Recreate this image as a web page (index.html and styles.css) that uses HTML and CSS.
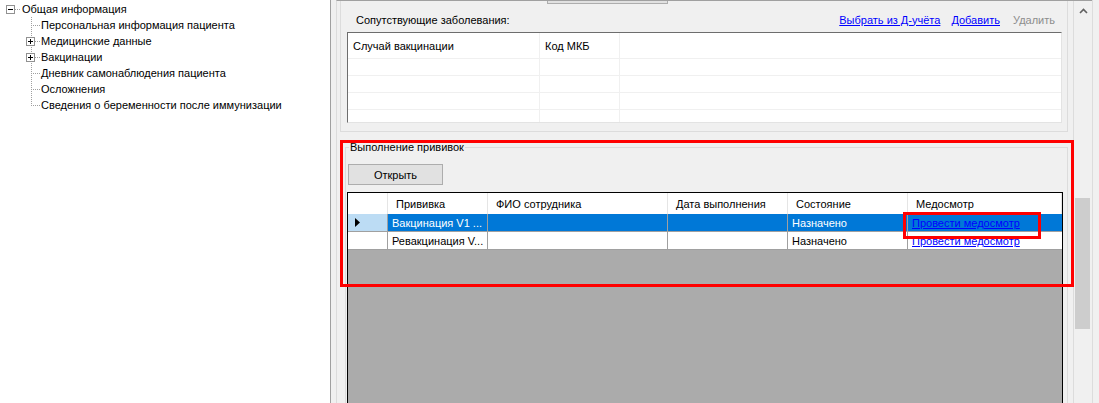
FILE: index.html
```html
<!DOCTYPE html>
<html lang="ru">
<head>
    <meta charset="UTF-8">
    <meta name="viewport" content="width=device-width, initial-scale=1.0">
    <title>Вакцинация</title>
    <link rel="stylesheet" href="styles.css">
</head>
<body>
    <div class="app">
        <div class="tree">
            <div class="node">
                <svg class="gutter-top" width="21" height="16">
                    <rect x="6.5" y="4.5" width="8" height="8" fill="#fff" stroke="#919191"/>
                    <line x1="8" y1="8.5" x2="13" y2="8.5" stroke="#000"/>
                    <line x1="15" y1="8.5" x2="21" y2="8.5" stroke="#a0a0a0" stroke-dasharray="1 1"/>
                </svg>
                <span>Общая информация</span>
            </div>
            <div class="node">
                <svg class="gutter" width="40" height="16">
                    <line x1="31.5" y1="0" x2="31.5" y2="16" stroke="#a0a0a0" stroke-dasharray="1 1"/>
                    <line x1="33" y1="8.5" x2="40" y2="8.5" stroke="#a0a0a0" stroke-dasharray="1 1"/>
                </svg>
                <span>Персональная информация пациента</span>
            </div>
            <div class="node">
                <svg class="gutter" width="40" height="16">
                    <line x1="31.5" y1="0" x2="31.5" y2="16" stroke="#a0a0a0" stroke-dasharray="1 1"/>
                    <rect x="26.5" y="4.5" width="8" height="8" fill="#fff" stroke="#919191"/>
                    <line x1="28" y1="8.5" x2="33" y2="8.5" stroke="#000"/>
                    <line x1="30.5" y1="6" x2="30.5" y2="11" stroke="#000"/>
                    <line x1="35" y1="8.5" x2="40" y2="8.5" stroke="#a0a0a0" stroke-dasharray="1 1"/>
                </svg>
                <span>Медицинские данные</span>
            </div>
            <div class="node">
                <svg class="gutter" width="40" height="16">
                    <line x1="31.5" y1="0" x2="31.5" y2="16" stroke="#a0a0a0" stroke-dasharray="1 1"/>
                    <rect x="26.5" y="4.5" width="8" height="8" fill="#fff" stroke="#919191"/>
                    <line x1="28" y1="8.5" x2="33" y2="8.5" stroke="#000"/>
                    <line x1="30.5" y1="6" x2="30.5" y2="11" stroke="#000"/>
                    <line x1="35" y1="8.5" x2="40" y2="8.5" stroke="#a0a0a0" stroke-dasharray="1 1"/>
                </svg>
                <span>Вакцинации</span>
            </div>
            <div class="node">
                <svg class="gutter" width="40" height="16">
                    <line x1="31.5" y1="0" x2="31.5" y2="16" stroke="#a0a0a0" stroke-dasharray="1 1"/>
                    <line x1="33" y1="8.5" x2="40" y2="8.5" stroke="#a0a0a0" stroke-dasharray="1 1"/>
                </svg>
                <span>Дневник самонаблюдения пациента</span>
            </div>
            <div class="node">
                <svg class="gutter" width="40" height="16">
                    <line x1="31.5" y1="0" x2="31.5" y2="16" stroke="#a0a0a0" stroke-dasharray="1 1"/>
                    <line x1="33" y1="8.5" x2="40" y2="8.5" stroke="#a0a0a0" stroke-dasharray="1 1"/>
                </svg>
                <span>Осложнения</span>
            </div>
            <div class="node">
                <svg class="gutter" width="40" height="16">
                    <line x1="31.5" y1="0" x2="31.5" y2="9" stroke="#a0a0a0" stroke-dasharray="1 1"/>
                    <line x1="33" y1="8.5" x2="40" y2="8.5" stroke="#a0a0a0" stroke-dasharray="1 1"/>
                </svg>
                <span>Сведения о беременности после иммунизации</span>
            </div>
        </div>

        <div class="splitter"></div>

        <div class="main">
            <div class="content">
                <div class="top-box">
                    <div class="cut-btn"></div>
                    <div class="label-row">
                        <span>Сопутствующие заболевания:</span>
                        <div class="links">
                            <a href="#">Выбрать из Д-учёта</a>
                            <a href="#">Добавить</a>
                            <span class="disabled">Удалить</span>
                        </div>
                    </div>
                    <div class="list">
                        <div class="list-row list-head">
                            <div class="lc c-case">Случай вакцинации</div>
                            <div class="lc c-mkb">Код МКБ</div>
                            <div class="lc c-rest"></div>
                        </div>
                        <div class="list-row">
                            <div class="lc c-case"></div><div class="lc c-mkb"></div><div class="lc c-rest"></div>
                        </div>
                        <div class="list-row">
                            <div class="lc c-case"></div><div class="lc c-mkb"></div><div class="lc c-rest"></div>
                        </div>
                        <div class="list-row">
                            <div class="lc c-case"></div><div class="lc c-mkb"></div><div class="lc c-rest"></div>
                        </div>
                        <div class="list-row">
                            <div class="lc c-case"></div><div class="lc c-mkb"></div><div class="lc c-rest"></div>
                        </div>
                    </div>
                </div>

                <fieldset class="group">
                    <legend>Выполнение прививок</legend>
                    <button class="btn">Открыть</button>
                    <div class="grid">
                        <div class="g-row g-head">
                            <div class="gc g-rh"></div>
                            <div class="gc g-vac">Прививка</div>
                            <div class="gc g-fio">ФИО сотрудника</div>
                            <div class="gc g-date">Дата выполнения</div>
                            <div class="gc g-state">Состояние</div>
                            <div class="gc g-med">Медосмотр</div>
                        </div>
                        <div class="g-row selected">
                            <div class="gc g-rh">
                                <svg width="6" height="9"><polygon points="0,0 5,4.5 0,9" fill="#000"/></svg>
                            </div>
                            <div class="gc g-vac">Вакцинация V1 ...</div>
                            <div class="gc g-fio"></div>
                            <div class="gc g-date"></div>
                            <div class="gc g-state">Назначено</div>
                            <div class="gc g-med"><a href="#">Провести медосмотр</a></div>
                        </div>
                        <div class="g-row">
                            <div class="gc g-rh"></div>
                            <div class="gc g-vac">Ревакцинация V...</div>
                            <div class="gc g-fio"></div>
                            <div class="gc g-date"></div>
                            <div class="gc g-state">Назначено</div>
                            <div class="gc g-med"><a href="#">Провести медосмотр</a></div>
                        </div>
                    </div>
                </fieldset>
            </div>
            <div class="vscroll">
                <svg class="arrow" width="9" height="6"><polyline points="1,5 4.5,1.5 8,5" fill="none" stroke="#606060" stroke-width="1.6"/></svg>
                <div class="thumb"></div>
            </div>
            <div class="edge"></div>
        </div>

        <div class="mark mark-group"></div>
        <div class="mark mark-link"></div>
    </div>
</body>
</html>
```

FILE: styles.css
```css
* {
    box-sizing: border-box;
}
body {
    margin: 0;
    font-family: "Liberation Sans", Arial, sans-serif;
    font-size: 11px;
    color: #000;
    background-color: #f0f0f0;
    overflow: hidden;
}
.app {
    position: relative;
    display: flex;
    width: 1099px;
    height: 403px;
    overflow: hidden;
}
.tree {
    width: 331px;
    height: 403px;
    padding-top: 1px;
    background-color: #fff;
    border-right: 1px solid #a0a0a0;
}
.node {
    display: flex;
    align-items: center;
    height: 16px;
    white-space: nowrap;
}
.gutter-top {
    margin-right: 1px;
}
.gutter {
    margin-right: 1px;
}
.splitter {
    width: 5px;
    background-color: #f0f0f0;
}
.main {
    display: flex;
    border-top: 1px solid #a0a0a0;
    border-left: 1px solid #dcdcdc;
    height: 403px;
}
.content {
    width: 737px;
    border-right: 1px solid #dcdcdc;
    padding: 0 5px 0 3px;
}
.vscroll {
    position: relative;
    width: 18px;
    background-color: #f0f0f0;
}
.arrow {
    display: block;
    margin: 7px 0 0 5px;
}
.thumb {
    margin: 184px 0 0 1px;
    width: 15px;
    height: 131px;
    background-color: #cdcdcd;
}
.edge {
    width: 7px;
    margin-top: -1px;
    background-color: #f0f0f0;
    border-left: 1px solid #dcdcdc;
}
.top-box {
    height: 131px;
    border: 1px solid #dcdcdc;
    border-top: none;
}
.cut-btn {
    width: 121px;
    height: 3px;
    margin-left: 206px;
    background-color: #e1e1e1;
    border: 1px solid #adadad;
    border-top: none;
}
.label-row {
    display: flex;
    justify-content: space-between;
    align-items: center;
    height: 28px;
    padding: 3px 12px 0 15px;
}
.links {
    display: flex;
    gap: 11px;
}
.links a {
    color: #0000ff;
}
.disabled {
    color: #8d8d8d;
    margin-left: 2px;
}
.list {
    height: 91px;
    margin: 0 5px 0 6px;
    background-color: #fff;
    border-top: 1px solid #6d6d6d;
    border-left: 1px solid #6d6d6d;
    border-right: 1px solid #e3e3e3;
    border-bottom: 1px solid #e3e3e3;
    overflow: hidden;
}
.list-row {
    display: flex;
    height: 17px;
    border-bottom: 1px solid #f0f0f0;
}
.list-head {
    height: 26px;
    align-items: stretch;
}
.lc {
    display: flex;
    align-items: center;
    padding-left: 5px;
    border-right: 1px solid #f0f0f0;
}
.c-case {
    width: 192px;
}
.c-mkb {
    width: 80px;
}
.c-rest {
    flex: 1;
    border-right: none;
}
.group {
    margin: 9px 0 0 5px;
    padding: 0;
    min-width: 0;
    height: 270px;
    border: 1px solid #dcdcdc;
}
.group legend {
    margin-left: 3px;
    padding: 0 1px;
    line-height: 13px;
}
.btn {
    display: block;
    width: 95px;
    height: 21px;
    margin: 10px 0 0 2px;
    padding: 0;
    font-family: "Liberation Sans", Arial, sans-serif;
    font-size: 11px;
    color: #000;
    background-color: #e1e1e1;
    border: 1px solid #adadad;
}
.grid {
    height: 220px;
    margin: 7px 4px 0 1px;
    background-color: #ababab;
    border: 1px solid #000;
}
.g-row {
    display: flex;
    height: 18px;
    background-color: #fff;
    border-bottom: 1px solid #a0a0a0;
}
.g-head {
    height: 21px;
    border-bottom: none;
}
.gc {
    display: flex;
    align-items: center;
    padding-left: 4px;
    white-space: nowrap;
    overflow: hidden;
    border-right: 1px solid #a0a0a0;
}
.g-head .gc {
    padding-left: 8px;
    border-right: 1px solid #e5e5e5;
}
.g-rh {
    width: 40px;
    padding-left: 7px;
}
.g-vac {
    width: 100px;
}
.g-fio {
    width: 180px;
}
.g-date {
    width: 120px;
}
.g-state {
    width: 120px;
}
.g-med {
    flex: 1;
    border-right: none;
}
.g-med a {
    color: #0000ff;
}
.selected {
    background-color: #0078d7;
    color: #fff;
}
.selected .g-rh {
    background-color: #bcdcf4;
}
.mark {
    position: absolute;
    border: 3px solid #ff0000;
}
.mark-group {
    left: 340px;
    top: 140px;
    width: 734px;
    height: 147px;
}
.mark-link {
    left: 903px;
    top: 212px;
    width: 138px;
    height: 27px;
}
```
